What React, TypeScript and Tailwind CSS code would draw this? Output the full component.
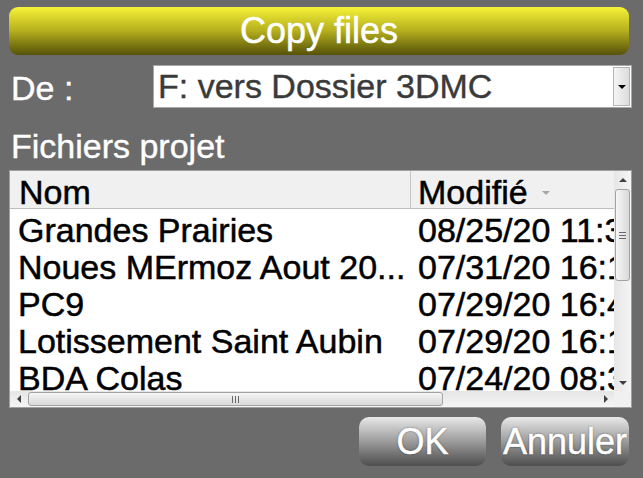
import React from "react";

const rows = [
  { name: "Grandes Prairies", date: "08/25/20 11:32" },
  { name: "Noues MErmoz Aout 20...", date: "07/31/20 16:14" },
  { name: "PC9", date: "07/29/20 16:45" },
  { name: "Lotissement Saint Aubin", date: "07/29/20 16:12" },
  { name: "BDA Colas", date: "07/24/20 08:31" },
];

function ArrowUp() {
  return <div className="h-0 w-0 border-x-[4px] border-b-[4px] border-x-transparent border-b-[#404040]" />;
}

function ArrowDown({ color = "border-t-[#404040]" }: { color?: string }) {
  return <div className={`h-0 w-0 border-x-[4px] border-t-[4px] border-x-transparent ${color}`} />;
}

function ArrowLeft() {
  return <div className="h-0 w-0 border-y-[4px] border-r-[4px] border-y-transparent border-r-[#404040]" />;
}

function ArrowRight() {
  return <div className="h-0 w-0 border-y-[4px] border-l-[4px] border-y-transparent border-l-[#404040]" />;
}

function VScroll() {
  return (
    <div className="flex w-[17px] shrink-0 flex-col bg-linear-to-r from-[#e6e6e6] to-[#f5f5f5]">
      <div className="flex h-[17px] items-center justify-center">
        <ArrowUp />
      </div>
      <div className="mx-[1px] mt-[1px] flex h-[92px] flex-col items-center justify-center gap-[2px] rounded-[3px] border border-[#a3a3a3] bg-linear-to-r from-[#f6f6f6] to-[#d9d9d9]">
        <div className="h-[1px] w-[7px] bg-[#6a6a6a]" />
        <div className="h-[1px] w-[7px] bg-[#6a6a6a]" />
        <div className="h-[1px] w-[7px] bg-[#6a6a6a]" />
      </div>
      <div className="flex-1" />
      <div className="flex h-[17px] items-center justify-center">
        <ArrowDown />
      </div>
    </div>
  );
}

function HScroll() {
  return (
    <div className="flex h-[16px] shrink-0">
      <div className="flex flex-1 bg-linear-to-b from-[#e6e6e6] to-[#f5f5f5]">
        <div className="flex w-[17px] items-center justify-center">
          <ArrowLeft />
        </div>
        <div className="my-[1px] ml-[1px] flex w-[415px] items-center justify-center gap-[2px] rounded-[3px] border border-[#a3a3a3] bg-linear-to-b from-[#f6f6f6] to-[#d9d9d9]">
          <div className="h-[7px] w-[1px] bg-[#6a6a6a]" />
          <div className="h-[7px] w-[1px] bg-[#6a6a6a]" />
          <div className="h-[7px] w-[1px] bg-[#6a6a6a]" />
        </div>
        <div className="flex-1" />
        <div className="flex w-[17px] items-center justify-center">
          <ArrowRight />
        </div>
      </div>
      <div className="w-[17px] bg-[#f0f0f0]" />
    </div>
  );
}

function FileList() {
  return (
    <div className="mt-[5px] flex h-[238px] w-[623px] flex-col border border-[#a0a0a0] bg-white">
      <div className="flex min-h-0 flex-1">
        <div className="min-w-0 flex-1 overflow-hidden whitespace-nowrap text-[34px] text-black [-webkit-text-stroke-width:0.5px]">
          <div className="flex h-[38px] border-b border-[#bdbdbd] bg-[#f0f0f0]">
            <div className="w-[401px] shrink-0 border-r border-[#c6c6c6] pl-[9px] pt-[3px] leading-[36px]">Nom</div>
            <div className="flex shrink-0 items-start gap-[14px] pl-[7px] pt-[3px] leading-[36px]">
              <span>Modifié</span>
              <div className="mt-[17px]">
                <ArrowDown color="border-t-[#a6a6a6]" />
              </div>
            </div>
          </div>
          {rows.map((r) => (
            <div key={r.name} className="flex h-[37px] pt-[6px] leading-[31px]">
              <div className="w-[401px] shrink-0 overflow-hidden pl-[8px]">{r.name}</div>
              <div className="shrink-0 pl-[7px]">{r.date}</div>
            </div>
          ))}
        </div>
        <VScroll />
      </div>
      <HScroll />
    </div>
  );
}

function GrayButton({ label }: { label: string }) {
  return (
    <div className="flex h-[49px] items-center justify-center whitespace-nowrap rounded-[10px] bg-linear-to-b from-[#e9e9e9] via-[#9c9c9c] to-[#4e4e4e] text-[36px] leading-none text-white [-webkit-text-stroke-width:0.5px] [text-shadow:0_0_2px_rgba(0,0,0,0.7)]">
      {label}
    </div>
  );
}

export default function App() {
  return (
    <div className="flex h-[478px] w-[643px] flex-col overflow-hidden bg-[#6b6b6b] pl-[9px] pr-[11px] pt-[7px] font-['Liberation_Sans',Arial,sans-serif]">
      <div className="flex h-[48px] w-[620px] items-center justify-center rounded-[9px] bg-linear-to-b from-[#f7f337] via-[#b4af1d] to-[#56520a] text-[36px] leading-none text-white [-webkit-text-stroke-width:0.5px]">
        Copy files
      </div>

      <div className="mt-[10px] flex h-[43px] items-center">
        <div className="w-[144px] shrink-0 pl-[2px] pt-[2px] text-[34px] leading-none text-white [-webkit-text-stroke-width:0.4px]">De :</div>
        <div className="flex h-[43px] w-[479px] shrink-0 border border-[#a8a8a8] bg-white">
          <div className="flex-1 pl-[4px] text-[34px] leading-[41px] text-[#3a3a3a] [-webkit-text-stroke-width:0.4px]">F: vers Dossier 3DMC</div>
          <div className="my-[1px] mr-[1px] flex w-[17px] items-center justify-center border border-[#b4b4b4] bg-linear-to-r from-[#f5f5f5] to-[#dcdcdc]">
            <ArrowDown color="border-t-black" />
          </div>
        </div>
      </div>

      <div className="mt-[19px] h-[38px] pl-[2px] text-[34px] leading-[38px] text-white [-webkit-text-stroke-width:0.4px]">Fichiers projet</div>

      <FileList />

      <div className="mt-[9px] flex justify-end gap-[15px] pr-[3px]">
        <div className="w-[127px]">
          <GrayButton label="OK" />
        </div>
        <div className="w-[128px]">
          <GrayButton label="Annuler" />
        </div>
      </div>
    </div>
  );
}
